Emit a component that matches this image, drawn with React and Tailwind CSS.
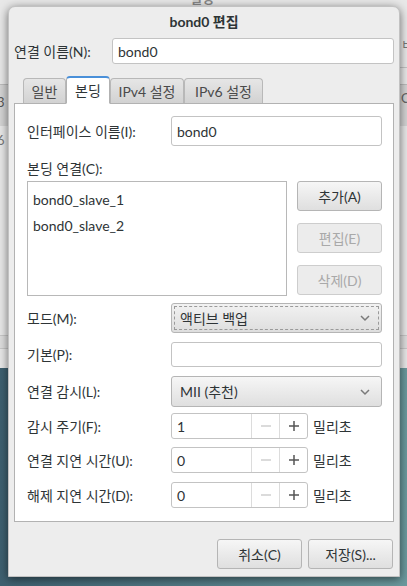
import React from 'react';

const Chevron = () => (
  <svg width="12" height="8" viewBox="0 0 12 8" className="shrink-0">
    <path d="M2 2 L6 6 L10 2" fill="none" stroke="#7a7a7a" strokeWidth="1.5" />
  </svg>
);

const Entry = ({ value, h = 'h-[30px]' }) => (
  <div className={`flex-1 ${h} flex items-center px-[5px] bg-white border border-[#c3c3c3] rounded-[3px] text-[14px] text-[#2e3436]`}>
    {value}
  </div>
);

const Button = ({ children, disabled, className = '' }) => (
  <div
    className={`w-[85px] h-[30px] flex items-center justify-center rounded-[3px] border text-[14px] ${
      disabled
        ? 'border-[#cdcdcd] bg-[#ececec] text-[#a9a9a9]'
        : 'border-[#b5b5b5] bg-linear-to-b from-[#f6f6f6] to-[#dfdfdf] text-[#2e3436]'
    } ${className}`}
  >
    {children}
  </div>
);

const Spin = ({ value }) => (
  <div className="flex items-center">
    <div className="w-[137px] h-[26px] flex bg-white border border-[#c3c3c3] rounded-[3px] text-[14px] text-[#2e3436]">
      <div className="flex-1 flex items-center px-[5px]">{value}</div>
      <div className="w-[28px] flex items-center justify-center border-l border-[#dcdcdc]">
        <svg width="12" height="12" viewBox="0 0 12 12"><path d="M1 6 H11" stroke="#cfcfcf" strokeWidth="1.5" /></svg>
      </div>
      <div className="w-[28px] flex items-center justify-center border-l border-[#dcdcdc]">
        <svg width="12" height="12" viewBox="0 0 12 12"><path d="M1 6 H11 M6 1 V11" stroke="#555" strokeWidth="1.5" /></svg>
      </div>
    </div>
    <span className="ml-[5px] text-[14px]">밀리초</span>
  </div>
);

const Row = ({ label, children, className = '' }) => (
  <div className={`flex items-center ${className}`}>
    <div className="w-[144px] shrink-0 text-[14px]">{label}</div>
    {children}
  </div>
);

const tabs = [
  { name: '일반', w: 'w-[43px]' },
  { name: '본딩', w: 'w-[44px]', active: true },
  { name: 'IPv4 설정', w: 'w-[74px]' },
  { name: 'IPv6 설정', w: 'w-[79px]' },
];

export default function App() {
  return (
    <div className="relative w-[407px] h-[586px] overflow-hidden font-['Lato','Noto_Sans_CJK_KR',sans-serif] text-[#2e3436]">
      {/* background window */}
      <div className="h-[368px] bg-[#e8e8e8] relative">
        <div className="absolute left-0 right-0 top-[84px] h-[42px] bg-[#d4d4d4] border-t border-[#bcbcbc]" />
        <div className="absolute right-0 w-[10px] top-[67px] border-t border-[#c4c4c4]" />
        <div className="absolute left-0 right-0 top-[335px] h-[14px] border-t border-b border-[#c8c8c8] bg-[#dedede]" />
        <span className="absolute left-[-3px] top-[96px] text-[13px] leading-none text-[#555]">3</span>
        <span className="absolute left-[-3px] top-[134px] text-[13px] leading-none text-[#777]">6</span>
        <span className="absolute left-[401px] top-[38px] text-[13px] leading-none text-[#777]">ㅂ</span>
        <span className="absolute left-[401px] top-[92px] text-[13px] leading-none text-[#666]">C</span>
        <span className="absolute left-[190px] top-[-8px] text-[13px] leading-none font-bold text-[#888]">설정</span>
      </div>
      <div className="h-[218px] bg-linear-to-r from-[#3e6070] to-[#6b999d]" />

      {/* dialog */}
      <div className="absolute left-[8px] top-[6px] w-[392px] h-[571px] flex flex-col bg-[#ededed] rounded-t-[7px] shadow-[0_2px_10px_rgba(0,0,0,0.55)] border border-[#c2c2c2]">
        <div className="h-[29px] flex items-center justify-center text-[14px] font-bold">bond0 편집</div>

        <div className="mt-[2px] px-[5px] flex items-center h-[26px]">
          <div className="w-[98px] shrink-0 text-[14px]">연결 이름(N):</div>
          <Entry value="bond0" h="h-[26px]" />
        </div>

        {/* tabs */}
        <div className="mt-[12px] mx-[5px] h-[27px] pl-[9px] flex items-end relative z-10">
          {tabs.map((t) =>
            t.active ? (
              <div
                key={t.name}
                className={`${t.w} h-[28px] -mb-px flex items-center justify-center bg-white border border-[#b2b2b2] border-b-white border-t-2 border-t-[#4a90d9] rounded-t-[4px] text-[14px]`}
              >
                {t.name}
              </div>
            ) : (
              <div
                key={t.name}
                className={`${t.w} h-[25px] flex items-center justify-center bg-linear-to-b from-[#e6e6e6] to-[#d2d2d2] border border-[#b8b8b8] border-b-0 rounded-t-[4px] text-[14px] text-[#4a4a4a]`}
              >
                {t.name}
              </div>
            )
          )}
        </div>

        {/* panel */}
        <div className="mx-[5px] h-[419px] bg-white border border-[#b2b2b2] pt-[12px] pl-[12px] pr-[11px]">
          <Row label="인터페이스 이름(I):">
            <Entry value="bond0" />
          </Row>
          <div className="mt-[12px] h-[20px] flex items-center text-[14px]">본딩 연결(C):</div>
          <div className="mt-[3px] flex gap-[10px]">
            <div className="flex-1 h-[115px] border border-[#b8b8b8] pl-[5px] pt-[4px] text-[14px]">
              <div className="h-[26px] flex items-center">bond0_slave_1</div>
              <div className="h-[26px] flex items-center">bond0_slave_2</div>
            </div>
            <div className="flex flex-col gap-[12px]">
              <Button>추가(A)</Button>
              <Button disabled>편집(E)</Button>
              <Button disabled>삭제(D)</Button>
            </div>
          </div>
          <Row label="모드(M):" className="mt-[7px]">
            <div className="flex-1 h-[30px] flex items-center justify-between pl-[8px] pr-[10px] rounded-[3px] border border-[#b5b5b5] bg-linear-to-b from-[#f2f2f2] to-[#dedede] outline-1 outline-dashed outline-[#9a9a9a] -outline-offset-4 text-[14px]">
              <span>액티브 백업</span>
              <Chevron />
            </div>
          </Row>
          <Row label="기본(P):" className="mt-[9px]">
            <Entry value="" h="h-[25px]" />
          </Row>
          <Row label="연결 감시(L):" className="mt-[9px]">
            <div className="flex-1 h-[31px] flex items-center justify-between pl-[8px] pr-[10px] rounded-[3px] border border-[#b5b5b5] bg-linear-to-b from-[#f6f6f6] to-[#dfdfdf] text-[14px]">
              <span>MII (추천)</span>
              <Chevron />
            </div>
          </Row>
          <Row label="감시 주기(F):" className="mt-[6px]">
            <Spin value="1" />
          </Row>
          <Row label="연결 지연 시간(U):" className="mt-[8px]">
            <Spin value="0" />
          </Row>
          <Row label="해제 지연 시간(D):" className="mt-[9px]">
            <Spin value="0" />
          </Row>
        </div>

        <div className="mt-[17px] pr-[6px] flex justify-end gap-[6px]">
          <Button>취소(C)</Button>
          <Button>저장(S)...</Button>
        </div>
      </div>
    </div>
  );
}
